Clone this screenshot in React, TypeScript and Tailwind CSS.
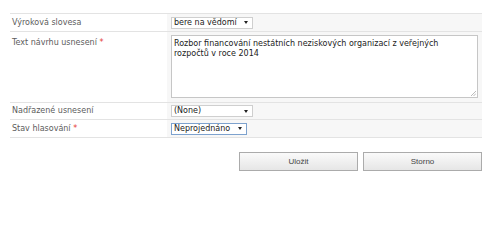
import React from "react";

function Arrow() {
  return (
    <svg width="4" height="3" viewBox="0 0 4 3" className="shrink-0">
      <path d="M0 0 L4 0 L2 3 Z" fill="#222" />
    </svg>
  );
}

function FakeSelect({ value, width, focused }: { value: string; width: string; focused?: boolean }) {
  return (
    <div
      className={`flex h-[12px] items-center justify-between bg-white pl-[2px] pr-[4px] text-[8px] leading-none text-[#222] ${width} ${
        focused ? "border border-[#7da2ce]" : "border border-[#cfcfcf]"
      }`}
    >
      <span>{value}</span>
      <Arrow />
    </div>
  );
}

export default function App() {
  return (
    <div
      className="h-[206px] w-[500px] bg-white pl-[10px] pt-[13px]"
      style={{ fontFamily: '"DejaVu Sans", Verdana, sans-serif' }}
    >
      <div className="w-[472px] border-t border-[#e3e3e3]">
        <div className="flex h-[18px] border-b border-[#e3e3e3]">
          <div className="flex w-[157px] items-center pl-[2px] text-[8px] text-[#5c5c5c]">Výroková slovesa</div>
          <div className="flex flex-1 items-center bg-[#f7f7f7] pl-[4px]">
            <FakeSelect value="bere na vědomí" width="w-[82px]" />
          </div>
        </div>
        <div className="flex h-[71px] border-b border-[#e3e3e3]">
          <div className="w-[157px] pl-[2px] pt-[5px] text-[8px] text-[#5c5c5c]">
            Text návrhu usnesení <span className="text-[#e53935]">*</span>
          </div>
          <div className="flex-1 bg-[#f7f7f7] pl-[4px] pt-[3px]">
            <div className="relative h-[63px] w-[307px] border border-[#c6c6c6] bg-white px-[2px] pt-[3px] text-[8px] leading-[10px] text-[#222]">
              Rozbor financování nestátních neziskových organizací z veřejných rozpočtů v roce 2014
              <svg width="6" height="6" viewBox="0 0 6 6" className="absolute bottom-[1px] right-[1px]">
                <path d="M6 1 L1 6 M6 3.5 L3.5 6" stroke="#aaa" strokeWidth="0.8" />
              </svg>
            </div>
          </div>
        </div>
        <div className="flex h-[17px] border-b border-[#e3e3e3]">
          <div className="flex w-[157px] items-center pl-[2px] text-[8px] text-[#5c5c5c]">Nadřazené usnesení</div>
          <div className="flex flex-1 items-center bg-[#f7f7f7] pl-[4px]">
            <FakeSelect value="(None)" width="w-[82px]" />
          </div>
        </div>
        <div className="flex h-[18px] border-b border-[#e3e3e3]">
          <div className="flex w-[157px] items-center pl-[2px] text-[8px] text-[#5c5c5c]">
            Stav hlasování&nbsp;<span className="text-[#e53935]">*</span>
          </div>
          <div className="flex flex-1 items-center bg-[#f7f7f7] pl-[4px]">
            <FakeSelect value="Neprojednáno" width="w-[76px]" focused />
          </div>
        </div>
      </div>
      <div className="mt-[14px] flex w-[472px] justify-end gap-[5px]">
        {["Uložit", "Storno"].map((t) => (
          <div
            key={t}
            className="flex h-[19px] w-[119px] items-center justify-center border border-[#ababab] bg-gradient-to-b from-[#fafafa] to-[#e6e6e6] text-[8px] font-normal text-[#444]"
            style={{ fontFamily: '"Liberation Sans", Arial, sans-serif' }}
          >
            {t}
          </div>
        ))}
      </div>
    </div>
  );
}
